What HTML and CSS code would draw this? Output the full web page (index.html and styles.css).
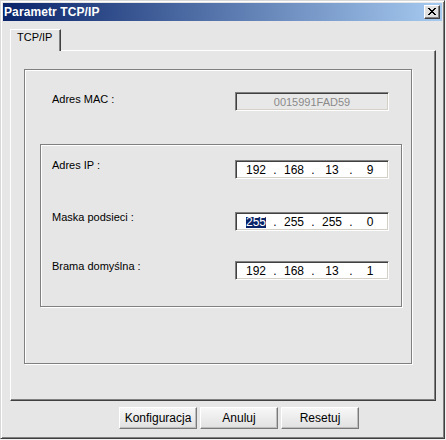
FILE: index.html
```html
<!DOCTYPE html>
<html lang="pl">
<head>
<meta charset="utf-8">
<title>Parametr TCP/IP</title>
<link rel="stylesheet" href="styles.css">
</head>
<body>
<div class="window">
  <div class="titlebar">
    <span class="title">Parametr TCP/IP</span>
    <div class="close" aria-label="Zamknij">
      <svg width="8" height="7" viewBox="0 0 8 7" shape-rendering="crispEdges">
        <path fill="#000" d="M0 0h2v1H0zM6 0h2v1H6zM1 1h2v1H1zM5 1h2v1H5zM2 2h4v1H2zM3 3h2v1H3zM2 4h4v1H2zM1 5h2v1H1zM5 5h2v1H5zM0 6h2v1H0zM6 6h2v1H6z"/>
      </svg>
    </div>
  </div>
  <div class="client">
    <div class="tabs">
      <div class="tab">TCP/IP</div>
    </div>
    <div class="panel">
      <div class="group outer">
        <div class="row mac-row">
          <span class="label mac-label">Adres MAC :</span>
          <div class="field disabled">0015991FAD59</div>
        </div>
        <div class="group inner">
          <div class="row ip-row first">
            <span class="label">Adres IP :</span>
            <div class="field ip">
              <span class="oct">192</span><span class="dot">.</span><span class="oct">168</span><span class="dot">.</span><span class="oct">13</span><span class="dot">.</span><span class="oct">9</span>
            </div>
          </div>
          <div class="row ip-row second">
            <span class="label">Maska podsieci :</span>
            <div class="field ip">
              <span class="oct"><span class="sel">255</span></span><span class="dot">.</span><span class="oct">255</span><span class="dot">.</span><span class="oct">255</span><span class="dot">.</span><span class="oct">0</span>
            </div>
          </div>
          <div class="row ip-row third">
            <span class="label">Brama domyślna :</span>
            <div class="field ip">
              <span class="oct">192</span><span class="dot">.</span><span class="oct">168</span><span class="dot">.</span><span class="oct">13</span><span class="dot">.</span><span class="oct">1</span>
            </div>
          </div>
        </div>
      </div>
    </div>
    <div class="buttons">
      <div class="btn">Konfiguracja</div>
      <div class="btn">Anuluj</div>
      <div class="btn">Resetuj</div>
    </div>
  </div>
</div>
</body>
</html>
```
FILE: styles.css
```css
* { box-sizing: border-box; }

html, body {
  margin: 0;
  padding: 0;
}

body {
  width: 446px;
  height: 440px;
  overflow: hidden;
  background: #f2f2f2;
  font-family: "Liberation Sans", Arial, sans-serif;
  font-size: 11px;
  color: #000;
}

.window {
  width: 445px;
  height: 439px;
  background: #e6e6e6;
  border: 1px solid;
  border-color: #d8d8d8 #404040 #404040 #d8d8d8;
  box-shadow: inset 1px 1px #ffffff, inset -1px -1px #808080;
  padding: 2px;
  display: flex;
  flex-direction: column;
}

.titlebar {
  height: 18px;
  flex: none;
  display: flex;
  align-items: center;
  padding-left: 1px;
  background: linear-gradient(to right, #0a246a 0%, #a6caf0 100%);
}

.title {
  color: #fff;
  font-weight: bold;
  font-size: 12px;
  letter-spacing: 0.1px;
  white-space: nowrap;
}

.close {
  margin-left: auto;
  margin-right: 2px;
  width: 16px;
  height: 14px;
  background: #e0e0e0;
  border: 1px solid;
  border-color: #ffffff #404040 #404040 #ffffff;
  box-shadow: inset -1px -1px #808080;
  display: flex;
  align-items: center;
  justify-content: center;
  padding: 0 1px 1px 0;
}

.close svg { display: block; }

.client {
  flex: 1;
  display: flex;
  flex-direction: column;
}

.tabs {
  display: flex;
  margin-top: 8px;
  margin-left: 7px;
}

.tab {
  position: relative;
  z-index: 1;
  width: 51px;
  height: 22px;
  margin-bottom: -1px;
  background: #e6e6e6;
  border-top: 1px solid #ffffff;
  border-left: 1px solid #ffffff;
  border-right: 1px solid #404040;
  box-shadow: inset -1px 0 #808080;
  padding: 1px 0 0 6px;
  line-height: 13px;
  font-size: 11px;
}

.panel {
  margin-left: 7px;
  width: 426px;
  height: 351px;
  border: 1px solid;
  border-color: #ffffff #404040 #404040 #ffffff;
  box-shadow: inset -1px -1px #808080;
  padding: 18px 0 0 13px;
}

.group {
  border: 1px solid #808080;
  box-shadow: inset 1px 1px #ffffff, 1px 1px #ffffff;
}

.group.outer {
  width: 388px;
  height: 295px;
}

.group.inner {
  width: 362px;
  height: 163px;
  margin-top: 33px;
  margin-left: 15px;
}

.row {
  display: flex;
  align-items: flex-start;
}

.mac-row {
  margin-top: 22px;
  padding-left: 27px;
}

.ip-row { padding-left: 11px; }
.ip-row.first { margin-top: 15px; }
.ip-row.second { margin-top: 33px; }
.ip-row.third { margin-top: 30px; }

.label {
  width: 183px;
  flex: none;
  line-height: 13px;
  margin-top: -1px;
  white-space: nowrap;
}

.label.mac-label { margin-top: 1px; }

.field {
  width: 154px;
  height: 19px;
  flex: none;
  border: 1px solid;
  border-color: #808080 #ffffff #ffffff #808080;
  box-shadow: inset 1px 1px #404040, inset -1px -1px #d4d0c8;
  background: #ffffff;
  padding-top: 2px;
  line-height: 14px;
}

.field.disabled {
  background: #e8e8e8;
  color: #8a8a8a;
  text-align: center;
  font-size: 11px;
}

.field.ip {
  display: flex;
  padding-left: 5px;
  font-size: 12px;
}

.oct {
  width: 30px;
  text-align: center;
}

.dot {
  width: 8px;
  text-align: center;
}

.sel {
  display: inline-block;
  background: #0a246a;
  color: #ffffff;
  line-height: 11px;
  height: 11px;
}

.buttons {
  display: flex;
  gap: 3px;
  margin-top: 6px;
  margin-left: 116px;
}

.btn {
  width: 78px;
  height: 22px;
  border: 1px solid;
  border-color: #ffffff #7a7a7a #7a7a7a #ffffff;
  box-shadow: inset -1px -1px #bdbdbd;
  background: linear-gradient(#f7f7f7, #e1e1e1);
  font-size: 12px;
  line-height: 20px;
  text-align: center;
  white-space: nowrap;
}
```
